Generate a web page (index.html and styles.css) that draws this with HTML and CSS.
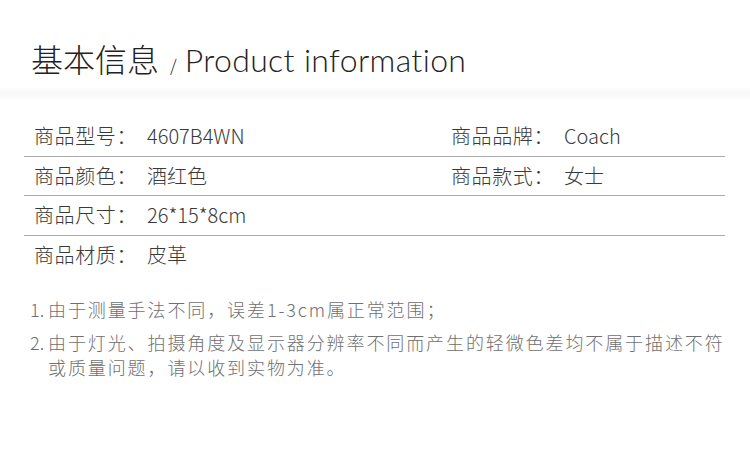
FILE: index.html
```html
<!DOCTYPE html>
<html lang="zh-CN">
<head>
    <meta charset="UTF-8">
    <meta name="viewport" content="width=device-width, initial-scale=1.0">
    <title>基本信息</title>
    <link rel="stylesheet" href="styles.css">
</head>
<body>
    <div class="head">
        <h1 class="title">基本信息<span class="slash">/</span><span class="en">Product information</span></h1>
    </div>
    <div class="band"></div>
    <div class="info">
        <div class="cell"><span class="label">商品型号：</span>4607B4WN</div>
        <div class="cell"><span class="label">商品品牌：</span>Coach</div>
        <div class="cell"><span class="label">商品颜色：</span>酒红色</div>
        <div class="cell"><span class="label">商品款式：</span>女士</div>
        <div class="cell"><span class="label">商品尺寸：</span>26*15*8cm</div>
        <div class="cell"></div>
        <div class="cell"><span class="label">商品材质：</span>皮革</div>
        <div class="cell"></div>
    </div>
    <div class="notes">
        <div class="note"><span class="num">1.</span><span>由于测量手法不同，误差1-3cm属正常范围；</span></div>
        <div class="note"><span class="num">2.</span><span>由于灯光、拍摄角度及显示器分辨率不同而产生的轻微色差均不属于描述不符或质量问题，请以收到实物为准。</span></div>
    </div>
</body>
</html>
```

FILE: styles.css
```css
body { margin: 0; background: #fff; font-family: "Noto Sans CJK SC", "Noto Sans", sans-serif; color: #333; }
.head { height: 88px; padding-left: 31px; box-sizing: border-box; }
.title { margin: 0; padding-top: 36px; font-size: 32px; font-weight: 300; line-height: 44px; color: #222; display: flex; align-items: baseline; }
.slash { font-size: 17px; margin: 0 8px 0 11px; }
.en { font-family: "Lato", "Noto Sans", sans-serif; font-weight: 300; font-size: 32px; letter-spacing: 0.35px; }
.band { height: 12px; background: linear-gradient(#fcfcfc, #f8f8f8 50%, #fdfdfd); margin-bottom: 17px; }
.info { margin: 0 25px 0 24px; display: grid; grid-template-columns: 417px 1fr; }
.cell { height: 39.5px; box-sizing: border-box; border-bottom: 1px solid #ababab; padding-left: 10px; font-size: 20px; font-weight: 300; line-height: 38px; color: #3a3a3a; display: flex; align-items: center; }
.cell:nth-last-child(-n+2) { border-bottom: none; }
.label { width: 113px; flex: none; letter-spacing: 0.6px; }
.notes { margin: 22px 20px 0 30px; color: #707070; font-size: 18px; line-height: 25px; letter-spacing: 1.9px; }
.note { display: flex; margin-bottom: 8px; font-weight: 300; }
.num { width: 18px; flex: none; letter-spacing: 0; }
```
